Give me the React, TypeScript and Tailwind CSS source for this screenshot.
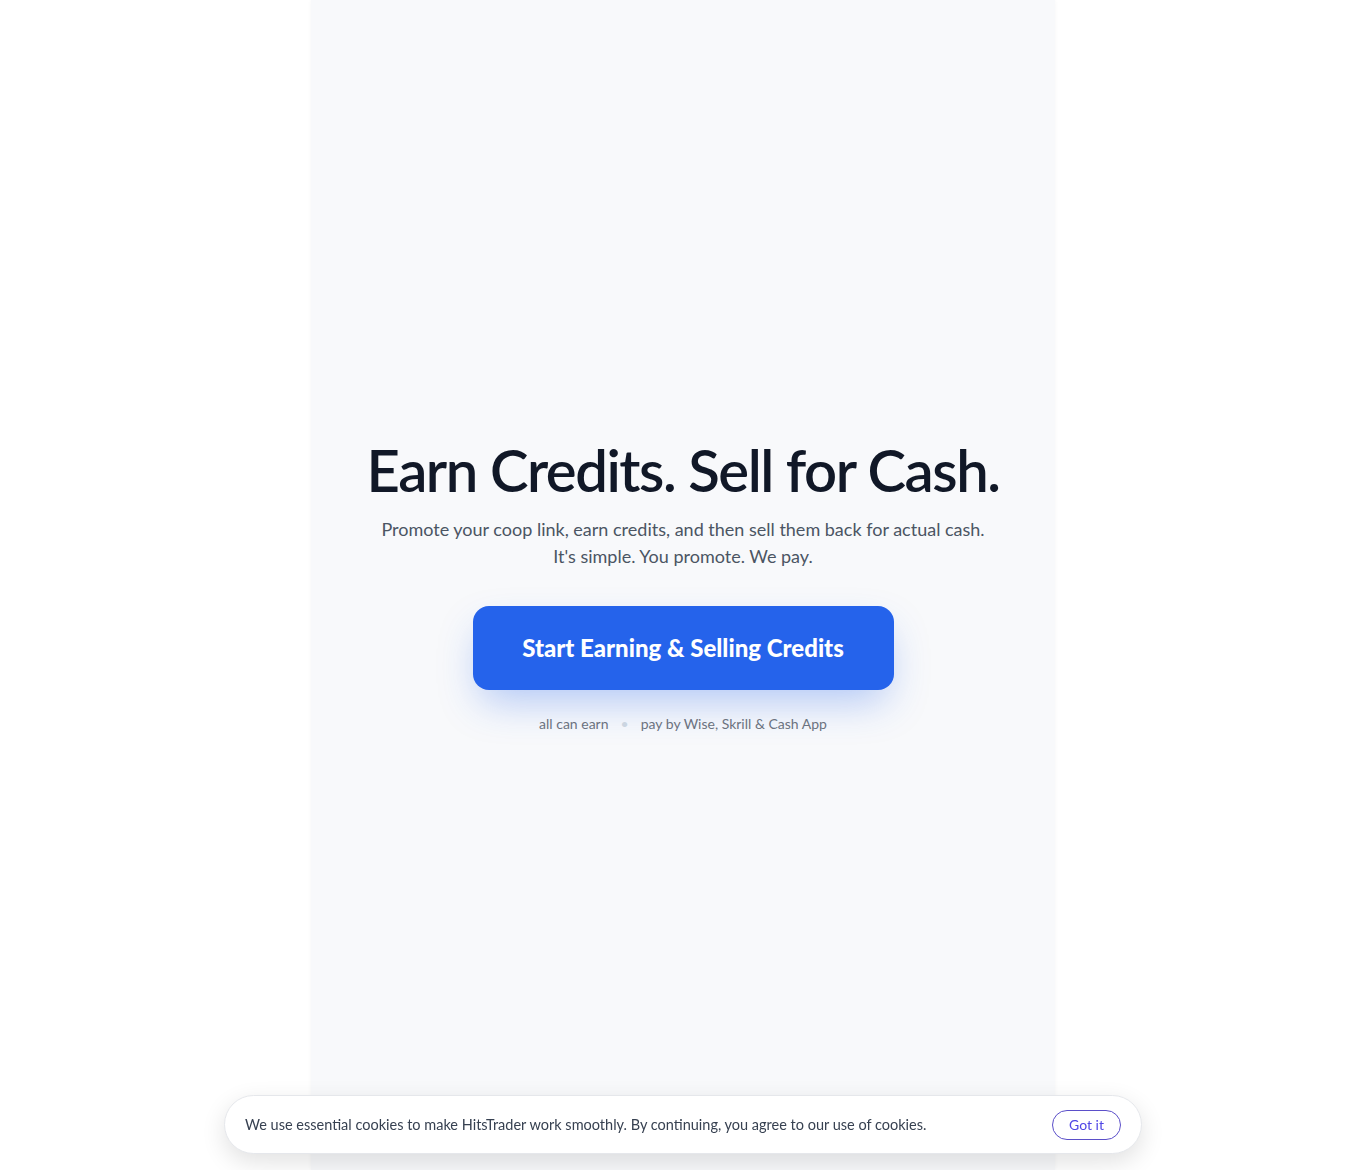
export default function App() {
  return (
    <div
      className="min-h-screen w-full bg-white"
      style={{ fontFamily: '"Segoe UI", Lato, sans-serif' }}
    >
      <main className="mx-auto flex min-h-screen w-[744px] flex-col items-center justify-center bg-[#f8f9fb] px-6 pb-0.5 shadow-[0_0_4px_rgba(0,0,0,0.04)]">
        <h1 className="whitespace-nowrap text-center text-[58px] font-semibold leading-tight tracking-tight text-[#111827]">
          Earn Credits. Sell for Cash.
        </h1>
        <p className="mt-2.5 text-center text-[18px] leading-[27px] text-[#4b5563]">
          Promote your coop link, earn credits, and then sell them back for actual cash.
          <br />
          It's simple. You promote. We pay.
        </p>
        <button className="mt-9 flex h-[84px] w-[421px] items-center justify-center rounded-2xl bg-[#2563eb] text-[24px] font-black text-white shadow-[0_18px_40px_-8px_rgba(37,99,235,0.35)]">
          Start Earning &amp; Selling Credits
        </button>
        <div className="mt-6 flex items-center gap-3 text-sm text-[#6b7280]">
          <span>all can earn</span>
          <span className="text-[#cbd5e1]">•</span>
          <span>pay by Wise, Skrill &amp; Cash App</span>
        </div>
      </main>

      <div className="fixed bottom-4 left-1/2 flex h-[59px] w-[918px] -translate-x-1/2 items-center justify-between rounded-full border border-[#e5e7eb] bg-white pl-5 pr-5 shadow-[0_8px_24px_rgba(0,0,0,0.12)]">
        <p className="text-[14.5px] text-[#374151]">
          We use essential cookies to make HitsTrader work smoothly. By continuing, you agree to our use of cookies.
        </p>
        <button className="h-[30px] rounded-full border border-[#5b4fc9] px-4 text-[14px] text-[#4f46e5]">
          Got it
        </button>
      </div>
    </div>
  );
}
